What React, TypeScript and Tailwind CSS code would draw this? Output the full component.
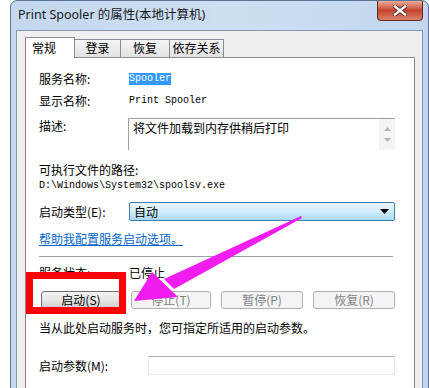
const cn = "font-['SimSun','Noto_Sans_CJK_SC',sans-serif]";
const mono = "font-['Liberation_Mono','Noto_Sans_CJK_SC',monospace] text-[10px]";

function Tab({ label, active, w }: { label: string; active?: boolean; w: string }) {
  if (active) {
    return (
      <div className={`relative z-10 -mb-px flex h-[21px] ${w} items-start border border-b-0 border-[#898c95] bg-white pl-[6px] pt-[3px] text-[12px] leading-[14px]`}>
        {label}
      </div>
    );
  }
  return (
    <div className={`flex h-[18px] ${w} items-start justify-center border border-b-0 border-l-0 border-[#898c95] bg-gradient-to-b from-[#f6f6f6] to-[#e1e1e1] pt-[1px] text-[12px] leading-[14px]`}>
      {label}
    </div>
  );
}

function Btn({ label, enabled, w }: { label: string; enabled?: boolean; w: string }) {
  return (
    <div
      className={`flex h-[18px] ${w} items-center justify-center rounded-[3px] border text-[12px] leading-none ${
        enabled
          ? 'border-[#707070] bg-gradient-to-b from-[#f2f2f2] via-[#e6e6e6] to-[#cfcfcf] text-black'
          : 'border-[#adb2b5] bg-[#f4f4f4] text-[#838383]'
      }`}
    >
      {label}
    </div>
  );
}

export default function App() {
  return (
    <div className={`relative h-[388px] w-[429px] overflow-hidden bg-white text-black ${cn}`}>
      {/* window */}
      <div className="ml-[10px] flex h-[400px] w-[419px] flex-col rounded-t-[7px] border border-[#5c7591] bg-gradient-to-r from-[#c3d7ee] via-[#cddff2] to-[#c2d7ef]">
        {/* title bar */}
        <div className="flex h-[29px] items-start">
          <div className="pl-[7px] pt-[7px] font-['Noto_Sans','Noto_Sans_CJK_SC',sans-serif] text-[12.5px] leading-[14px] text-[#1a1a1a]">
            Print Spooler 的属性(本地计算机)
          </div>
          <div className="ml-auto mr-[5px] flex h-[20px] w-[46px] items-center justify-center rounded-b-[4px] border border-t-0 border-[#6e2a1e] bg-gradient-to-b from-[#e9ab9b] via-[#c7442c] to-[#d9826b]">
            <svg width="14" height="11" viewBox="0 0 14 11">
              <path d="M2 1.5 L12 9.5 M12 1.5 L2 9.5" stroke="#4a2a22" strokeWidth="4.2" strokeLinecap="square" />
              <path d="M2 1.5 L12 9.5 M12 1.5 L2 9.5" stroke="#ffffff" strokeWidth="2.4" strokeLinecap="square" />
            </svg>
          </div>
        </div>
        {/* body */}
        <div className="flex flex-1 px-[5px]">
          <div className="flex flex-1 flex-col border border-[#8397b0] bg-[#f0f0f0] pl-[8px] pr-[7px] pt-[6px]">
            <div className="flex items-end">
              <Tab label="常规" active w="w-[50px]" />
              <Tab label="登录" w="w-[46px]" />
              <Tab label="恢复" w="w-[49px]" />
              <Tab label="依存关系" w="w-[54px]" />
            </div>
            <div className="flex-1 border border-[#898c95] bg-white pl-[13px] text-[12px] leading-[16px]">
              <div className="mt-[13px] flex h-[16px] items-center">
                <div className="w-[90px]">服务名称:</div>
                <span className={`bg-[#3399ff] px-0 leading-[12px] text-white ${mono}`}>Spooler</span>
              </div>
              <div className="mt-[6px] flex h-[16px] items-center">
                <div className="w-[90px]">显示名称:</div>
                <span className={mono}>Print Spooler</span>
              </div>
              <div className="mt-[9px] flex">
                <div className="w-[89px]">描述:</div>
                <div className="flex h-[32px] w-[267px] border-l border-t border-[#a0a0a0]">
                  <div className="flex-1 pl-[4px] pt-[1px]">将文件加载到内存供稍后打印</div>
                  <div className="flex w-[16px] flex-col items-center justify-between bg-[#f4f4f4] py-[8px]">
                    <svg width="7" height="4" viewBox="0 0 7 4"><path d="M0 4 L3.5 0 L7 4 Z" fill="#b4b4b4" /></svg>
                    <svg width="7" height="4" viewBox="0 0 7 4"><path d="M0 0 L3.5 4 L7 0 Z" fill="#b4b4b4" /></svg>
                  </div>
                </div>
              </div>
              <div className="mt-[12px] h-[16px]">可执行文件的路径:</div>
              <div className={`h-[16px] leading-[16px] ${mono}`}>D:\Windows\System32\spoolsv.exe</div>
              <div className="mt-[8px] flex items-center">
                <div className="w-[90px]">启动类型(E):</div>
                <div className="flex h-[19px] w-[266px] items-center rounded-[2px] border border-[#3c7fb1] bg-gradient-to-b from-[#eaf6fd] via-[#d3ecfa] to-[#a9daf5] pl-[4px] pr-[5px]">
                  <span className="flex-1">自动</span>
                  <svg width="9" height="5" viewBox="0 0 9 5"><path d="M0 0 L9 0 L4.5 5 Z" fill="#000" /></svg>
                </div>
              </div>
              <div className="mt-[10px] h-[16px] text-[#0066cc] underline">帮助我配置服务启动选项。</div>
              <div className="mr-[21px] mt-[9px] h-px bg-[#a0a0a0]" />
              <div className="mt-[8px] flex h-[16px] items-center">
                <div className="w-[90px]">服务状态:</div>
                <span>已停止</span>
              </div>
              <div className="ml-[2px] mt-[10px] flex gap-[10px]">
                <Btn label="启动(S)" enabled w="w-[80px]" />
                <Btn label="停止(T)" w="w-[80px]" />
                <Btn label="暂停(P)" w="w-[82px]" />
                <Btn label="恢复(R)" w="w-[82px]" />
              </div>
              <div className="mt-[11px] h-[16px]">当从此处启动服务时，您可指定所适用的启动参数。</div>
              <div className="mt-[20px] flex items-center">
                <div className="w-[109px]">启动参数(M):</div>
                <div className="h-[19px] w-[247px] border border-[#e3e9ef] border-t-[#abadb3] bg-white" />
              </div>
            </div>
          </div>
        </div>
      </div>

      {/* annotation: red box */}
      <div className="absolute left-[26px] top-[272px] h-[42px] w-[100px] border-[7px] border-[#ff0000]" />
      {/* annotation: magenta arrow */}
      <svg className="absolute left-0 top-0" width="429" height="388" viewBox="0 0 429 388">
        <polygon points="301,216 302,218 174,289 164,279" fill="#f01cf0" />
        <polygon points="134,301 152,272 178,297" fill="#f01cf0" />
      </svg>
    </div>
  );
}
